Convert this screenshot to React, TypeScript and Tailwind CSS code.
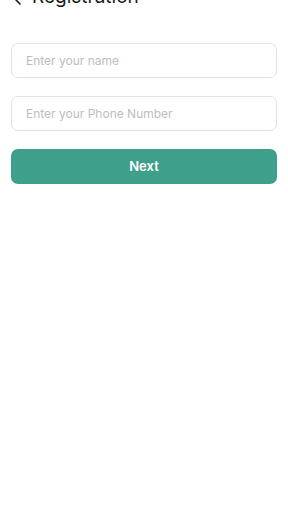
import { ChevronLeft } from 'lucide-react';

export default function App() {
  return (
    <div className="min-h-[512px] w-full overflow-hidden bg-white" style={{ fontFamily: 'Inter, "Noto Sans", sans-serif' }}>
      {/* Header, scrolled partly out of view */}
      <div className="-mt-[16px] flex h-[22px] items-end gap-[6px] px-[10px] text-[#1a1a1a]">
        <ChevronLeft size={16} strokeWidth={2.5} className="mb-[-2px]" />
        <span className="text-[19px] leading-none">Registration</span>
      </div>

      <div className="mt-[37px] flex flex-col px-[11px]">
        <input
          className="h-[35px] w-full rounded-[7px] border border-[#e2e2e2] px-[14px] text-[12px] outline-none placeholder:text-[#bdbdbd]"
          placeholder="Enter your name"
        />
        <input
          className="mt-[18px] h-[35px] w-full rounded-[7px] border border-[#e2e2e2] px-[14px] text-[12px] outline-none placeholder:text-[#bdbdbd]"
          placeholder="Enter your Phone Number"
        />
        <button className="mt-[18px] h-[35px] w-full rounded-[7px] bg-[#3e9f8b] text-[13px] font-semibold text-white">
          Next
        </button>
      </div>
    </div>
  );
}
